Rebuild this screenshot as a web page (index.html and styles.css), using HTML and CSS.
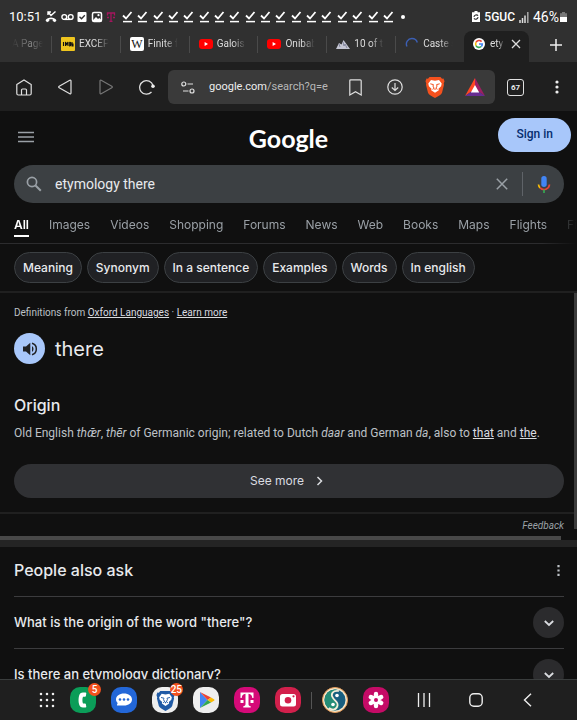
FILE: index.html
```html
<!DOCTYPE html>
<html lang="en">
<head>
<meta charset="utf-8">
<meta name="viewport" content="width=device-width, initial-scale=1">
<title>etymology there - Google Search</title>
<link rel="stylesheet" href="styles.css">
</head>
<body>
<svg class="defs" aria-hidden="true">
  <symbol id="check" viewBox="0 0 11 12"><path d="M1 4.500l3 3L9.500 1" fill="none" stroke="#fff" stroke-width="1.800"/><path d="M1 10.600h9" stroke="#fff" stroke-width="1.500"/></symbol>
  <symbol id="youtube" viewBox="0 0 14 14"><rect y="2" width="14" height="10" rx="3" fill="#f00"/><path d="M5.600 5v4l3.400-2z" fill="#fff"/></symbol>
  <symbol id="chevron" viewBox="0 0 12 12"><path d="M1.800 4L6 8l4.200-4" fill="none" stroke="#dadce0" stroke-width="1.800"/></symbol>
  <symbol id="lion" viewBox="0 0 20 22"><path d="M4.500 1h11l1.500 1.800 1.500-.3 1 2.800-.8 2.500.3 1-2 8c-.6 2-4 3.600-7 5.200-3-1.600-6.400-3.200-7-5.200L1 8.800l.3-1L.5 5.300l1-2.800 1.500.3z" fill="currentColor"/><path d="M6 4l4 .8L14 4l2.700 3.500-.6 2.700-2.600 2.500.3 1.500L10 16.800l-3.800-2.600.3-1.500L3.900 10.200 3.300 7.500z" fill="#fff"/><path d="M5.300 7.800l3.100.8-.4 1.500 1.100 2.300-1.600.9M14.700 7.800l-3.100.8.4 1.500-1.100 2.300 1.600.9M10 12.500v1.500" fill="none" stroke="currentColor" stroke-width="1"/></symbol>
</svg>

<div class="status">
  <time class="clock">10:51</time>
  <div class="notices">
    <svg width="12" height="12" viewBox="0 0 12 12"><path d="M3 1l3 3.500 4.500-4M3 4V1h3" fill="none" stroke="#fff" stroke-width="1.400"/><path d="M.5 9.200C3 5.500 9 5.500 11.500 9.200L10 11.200 7.700 10V8.300H4.300V10L2 11.200z" fill="#fff"/></svg>
    <svg width="13" height="12" viewBox="0 0 13 12"><g fill="none" stroke="#fff" stroke-width="1.400"><circle cx="3.300" cy="6" r="2.400"/><circle cx="9.700" cy="6" r="2.400"/><path d="M3.300 8.400h6.400"/></g></svg>
    <svg width="10" height="12" viewBox="0 0 10 12"><rect x=".5" y="1" width="9" height="10" rx="1" fill="#fff"/><path d="M2.500 5.800l2 2 3.300-3.600" fill="none" stroke="#303030" stroke-width="1.300"/></svg>
    <svg width="12" height="12" viewBox="0 0 12 12"><rect x="1.500" y="1.500" width="9" height="9" rx="1.500" fill="none" stroke="#fff" stroke-width="1.500"/><path d="M2 9l3-3 2 2 1.300-1L10.500 9v1.500H2z" fill="#fff"/><circle cx="7.500" cy="4.200" r="1.100" fill="#fff"/></svg>
    <svg width="10" height="12" viewBox="0 0 10 12"><path d="M1.500 4.500V2h7v2.500M5 2v8.300M3.500 10.300h3M1 6.500h2M7 6.500h2" fill="none" stroke="#a5155e" stroke-width="1.300"/></svg>
  </div>
  <div class="checks">
    <svg><use href="#check"/></svg><svg><use href="#check"/></svg><svg><use href="#check"/></svg><svg><use href="#check"/></svg><svg><use href="#check"/></svg><svg><use href="#check"/></svg><svg><use href="#check"/></svg><svg><use href="#check"/></svg><svg><use href="#check"/></svg><svg><use href="#check"/></svg><svg><use href="#check"/></svg><svg><use href="#check"/></svg><svg><use href="#check"/></svg><svg><use href="#check"/></svg><svg><use href="#check"/></svg><svg><use href="#check"/></svg><svg><use href="#check"/></svg><svg><use href="#check"/></svg>
  </div>
  <i class="dot"></i>
  <div class="signal">
    <svg width="8" height="12" viewBox="0 0 8 12"><path d="M2.500 0h3v1.300H8V11H0V1.300h2.500z" fill="#fff"/><path d="M2 6c0-2 3-3 4-1.200M6 6c0 2.200-3 3-4 1.400" fill="none" stroke="#303030" stroke-width="1.100"/></svg>
    <span class="net">5GUC</span>
    <svg width="10" height="11" viewBox="0 0 10 11"><path d="M1 8v3M3.500 6v5M6 3.500V11" stroke="#ddd" stroke-width="1.500"/><path d="M8.800 0v11" stroke="#aaa" stroke-width="1.500"/></svg>
    <span class="pct">46%</span>
    <svg width="7" height="12" viewBox="0 0 7 12"><path d="M2 1h3v1.200h2V11H0V2.200h2z" fill="#777"/><path d="M0 6h7v5H0z" fill="#fff"/></svg>
  </div>
</div>

<div class="tabs">
  <div class="tab first"><span class="fade-left">A Page</span></div>
  <div class="tab"><svg width="14" height="14" viewBox="0 0 14 14"><rect width="14" height="14" rx="1" fill="#efc51e"/><path d="M2.500 5v4M4.500 9V5l1.200 2.500L7 5v4M8.700 5v4c1.600 0 1.600-4 0-4M11 5v4h1V7h-1" fill="none" stroke="#111" stroke-width="1.100"/></svg><span>EXCEP</span></div>
  <div class="tab"><svg width="14" height="14" viewBox="0 0 14 14"><rect width="14" height="14" rx="2" fill="#fff"/><text x="7" y="11" class="wiki">W</text></svg><span>Finite f</span></div>
  <div class="tab"><svg width="14" height="14"><use href="#youtube"/></svg><span>Galois</span></div>
  <div class="tab"><svg width="14" height="14"><use href="#youtube"/></svg><span>Onibab</span></div>
  <div class="tab"><svg width="14" height="14" viewBox="0 0 14 14"><path d="M0 12l3-6 2.500 1.500L7.500 3 14 12z" fill="#c4c5d2"/><path d="M7 5l1 4 1-2 2 4M3 7l1 3" fill="none" stroke="#82859c"/></svg><span>10 of t</span></div>
  <div class="tab"><svg width="14" height="14" viewBox="0 0 14 14"><path d="M2 9.500A5.500 5.500 0 0 1 7 1.500a5.500 5.500 0 0 1 5.300 4" fill="none" stroke="#3c5fb4" stroke-width="1.400"/></svg><span>Caste s</span></div>
  <div class="tab active"><svg width="12" height="12" viewBox="0 0 12 12"><circle cx="6" cy="6" r="6" fill="#fff"/><g fill="none" stroke-width="1.600"><path d="M8.600 3.600A3.400 3.400 0 0 0 3 4.400" stroke="#ea4335"/><path d="M3 4.400a3.400 3.400 0 0 0 0 3.200" stroke="#fbbc05"/><path d="M3 7.600a3.400 3.400 0 0 0 5.300.9" stroke="#34a853"/><path d="M8.300 8.500A3.400 3.400 0 0 0 9.300 6H6" stroke="#4285f4"/></g></svg><span>ety</span><button class="bare" aria-label="Close tab"><svg width="10" height="10" viewBox="0 0 10 10"><path d="M1 1l8 8M9 1L1 9" stroke="#ddd" stroke-width="1.300"/></svg></button></div>
  <button class="bare add" aria-label="New tab"><svg width="12" height="12" viewBox="0 0 12 12"><path d="M6 0v12M0 6h12" stroke="#eee" stroke-width="1.500"/></svg></button>
</div>

<div class="toolbar">
  <div class="controls">
    <button class="bare" aria-label="Home"><svg width="16" height="17" viewBox="0 0 16 17"><path d="M.8 5.500L8 1l7.200 4.500v9c0 1-.5 1.500-1.500 1.500H2.300C1.300 16 .8 15.500.8 14.500zM5.500 16v-5c0-.7.3-1 1-1h3c.7 0 1 .3 1 1v5" fill="none" stroke="#e0e0e0" stroke-width="1.200"/></svg></button>
    <button class="bare" aria-label="Back"><svg width="14" height="16" viewBox="0 0 14 16"><path d="M1.200 7.200L11.800 1.300c.7-.3 1.200 0 1.200.7v12c0 .7-.5 1-1.200.7L1.200 8.800c-.7-.4-.7-1.200 0-1.600z" fill="none" stroke="#e0e0e0" stroke-width="1.200"/></svg></button>
    <button class="bare" aria-label="Forward"><svg width="14" height="16" viewBox="0 0 14 16"><path d="M12.800 7.200L2.200 1.300C1.500 1 1 1.300 1 2v12c0 .7.500 1 1.200.7l10.600-5.900c.7-.4.7-1.200 0-1.600z" fill="none" stroke="#777" stroke-width="1.200"/></svg></button>
    <button class="bare" aria-label="Reload"><svg width="16" height="16" viewBox="0 0 16 16"><path d="M12.500 13A6.800 6.800 0 1 1 14 6.500" fill="none" stroke="#e0e0e0" stroke-width="1.300"/><circle cx="14" cy="7.200" r="1.800" fill="#eee"/></svg></button>
  </div>
  <div class="urlbar">
    <button class="bare" aria-label="Site settings"><svg width="14" height="13" viewBox="0 0 14 13"><g fill="none" stroke="#e0e0e0" stroke-width="1.200"><circle cx="2.800" cy="3" r="2"/><path d="M6.500 3H12M2 10h5.500"/><circle cx="11" cy="10" r="2"/></g></svg></button>
    <a class="url" href="#">google.com<span>/search?q=e</span></a>
    <button class="bare" aria-label="Bookmark"><svg width="13" height="17" viewBox="0 0 13 17"><path d="M.8 1.800c0-.7.300-1 1-1h9.400c.7 0 1 .3 1 1V16L6.500 12.800.8 16z" fill="none" stroke="#e0e0e0" stroke-width="1.200"/></svg></button>
    <button class="bare" aria-label="Downloads"><svg width="16" height="16" viewBox="0 0 16 16"><g fill="none" stroke="#e0e0e0" stroke-width="1.200"><circle cx="8" cy="8" r="7.200"/><path d="M8 4v7.500M4.800 8.500L8 11.500l3.200-3"/></g></svg></button>
    <button class="bare orange" aria-label="Brave Shields"><svg width="20" height="22"><use href="#lion"/></svg></button>
    <button class="bare" aria-label="Brave Rewards"><svg width="20" height="18" viewBox="0 0 20 18"><path d="M10 0L0 18l10-7z" fill="#ff4724"/><path d="M10 0l10 18-10-7z" fill="#9e1f63"/><path d="M0 18h20l-10-7z" fill="#662d91"/><path d="M10 7l-4.200 7.500h8.400z" fill="#fff"/></svg></button>
  </div>
  <button class="count" aria-label="67 open tabs">67</button>
  <button class="bare menu" aria-label="Menu"><svg width="4" height="14" viewBox="0 0 4 14"><g fill="#eee"><circle cx="2" cy="2" r="1.600"/><circle cx="2" cy="7" r="1.600"/><circle cx="2" cy="12" r="1.600"/></g></svg></button>
</div>

<main>
  <header class="head">
    <button class="bare" aria-label="Main menu"><svg width="16" height="12" viewBox="0 0 16 12"><path d="M0 1.500h16M0 6h16M0 10.500h16" stroke="#9aa0a6" stroke-width="1.400"/></svg></button>
    <a class="logo" href="#">Google</a>
    <a class="signin" href="#">Sign in</a>
  </header>

  <form class="search">
    <svg width="16" height="16" viewBox="0 0 16 16"><circle cx="6" cy="6" r="4.600" fill="none" stroke="#9aa0a6" stroke-width="1.700"/><path d="M9.500 9.500l5.300 5.300" stroke="#9aa0a6" stroke-width="2"/></svg>
    <input type="text" value="etymology there" aria-label="Search">
    <button type="button" class="bare" aria-label="Clear"><svg width="12" height="12" viewBox="0 0 12 12"><path d="M.8.8l10.400 10.400M11.200.8L.8 11.200" stroke="#9aa0a6" stroke-width="1.500"/></svg></button>
    <i class="rule"></i>
    <button type="button" class="bare" aria-label="Search by voice"><svg width="14" height="18" viewBox="0 0 14 18"><rect x="4.300" y="1" width="5.400" height="11" rx="2.700" fill="#4285f4"/><g fill="none" stroke-width="1.700"><path d="M1.500 9.500a5.500 5.500 0 0 0 1.600 3.400" stroke="#fbbc04"/><path d="M3.100 12.900A5.500 5.500 0 0 0 12.500 9.500" stroke="#ea4335"/><path d="M7 14.500V18" stroke="#34a853"/></g></svg></button>
  </form>

  <nav class="modes">
    <a class="on" href="#">All</a><a href="#">Images</a><a href="#">Videos</a><a href="#">Shopping</a><a href="#">Forums</a><a href="#">News</a><a href="#">Web</a><a href="#">Books</a><a href="#">Maps</a><a href="#">Flights</a><a href="#">Finance</a>
  </nav>

  <div class="chips">
    <button>Meaning</button><button>Synonym</button><button>In a sentence</button><button>Examples</button><button>Words</button><button>In english</button>
  </div>

  <section class="dict">
    <p class="source">Definitions from <a href="#">Oxford Languages</a> · <a href="#">Learn more</a></p>
    <div class="word">
      <button class="speak" aria-label="Listen"><svg width="16" height="14" viewBox="0 0 16 14"><path d="M1 4.500h3L8.300.8v12.400L4 9.500H1z" fill="#202124"/><path d="M10 4c2 1.500 2 4.500 0 6z" fill="#202124"/><path d="M10 1.300c5.800 1.500 5.800 9.900 0 11.400" fill="none" stroke="#202124" stroke-width="1.500"/></svg></button>
      <h1>there</h1>
    </div>
    <h2>Origin</h2>
    <p class="origin">Old English <em>thǣr</em>, <em>thēr</em> of Germanic origin; related to Dutch <em>daar</em> and German <em>da</em>, also to <a href="#">that</a> and <a href="#">the</a>.</p>
    <button class="more">See more <svg width="8" height="10" viewBox="0 0 8 10"><path d="M1.500 1l4 4-4 4" fill="none" stroke="#dadce0" stroke-width="1.500"/></svg></button>
    <div class="feedback"><a href="#">Feedback</a></div>
    <i class="vbar"></i>
    <i class="hbar"></i>
  </section>

  <section class="paa">
    <div class="paa-head"><h2>People also ask</h2><button class="bare" aria-label="About this result"><svg width="3" height="11" viewBox="0 0 3 11"><path d="M.4 0h2.200v2.200H.4zM.4 4.400h2.200v2.200H.4zM.4 8.800h2.200V11H.4z" fill="#bdc1c6"/></svg></button></div>
    <div class="q"><h3>What is the origin of the word "there"?</h3><button aria-label="Expand"><svg width="12" height="12"><use href="#chevron"/></svg></button></div>
    <div class="q"><h3>Is there an etymology dictionary?</h3><button aria-label="Expand"><svg width="12" height="12"><use href="#chevron"/></svg></button></div>
  </section>
</main>

<nav class="dock">
  <button class="bare" aria-label="All apps"><svg width="16" height="16" viewBox="0 0 16 16"><path d="M2 2h12.100M2 8h12.100M2 14h12.100" stroke="#eee" stroke-width="2.600" stroke-linecap="round" stroke-dasharray="0 6"/></svg></button>
  <button class="app phone" aria-label="Phone"><svg width="26" height="26" viewBox="0 0 26 26"><path d="M9 9c.5-2.500 2-3.500 4-3.500h2.500c.5 0 .8.300.8.800l-.4 2.700c-.1.500-.4.700-.9.700h-2c-.8 1.500-.8 5.200 0 6.700h2c.5 0 .8.300.9.800l.4 2.600c0 .5-.3.800-.8.800H13c-2 0-3.500-1-4-3.500-.6-2.500-.6-5.500 0-8.100z" fill="#fff"/></svg><b>5</b></button>
  <button class="app chat" aria-label="Messages"><svg width="26" height="26" viewBox="0 0 26 26"><path d="M5 12.500C5 9 8.500 6.500 13 6.500s8 2.500 8 6-3.500 6-8 6H6.500c-.6 0-.7-.5-.4-1l.6-1.500C5.600 15 5 13.800 5 12.500z" fill="#fff"/><g fill="#2367d8"><circle cx="9" cy="12.500" r="1.300"/><circle cx="13" cy="12.500" r="1.300"/><circle cx="17" cy="12.500" r="1.300"/></g></svg></button>
  <button class="app brave" aria-label="Brave"><svg width="19" height="21"><use href="#lion"/></svg><b>25</b></button>
  <button class="app play" aria-label="Play Store"><svg width="26" height="26" viewBox="0 0 26 26"><path d="M7 5l7.500 8L7 21z" fill="#4285f4"/><path d="M7 5l11 5.500-3.500 2.500z" fill="#ea4335"/><path d="M18 10.500l3 1.700c.6.400.6 1.200 0 1.600l-3 1.700-3.500-2.500z" fill="#fbbc04"/><path d="M7 21l11-5.500-3.500-2.500z" fill="#34a853"/></svg></button>
  <button class="app tmo" aria-label="T-Mobile"><svg width="26" height="26" viewBox="0 0 26 26"><path d="M6.500 11V5.500h13V11h-1.200c-.2-2.500-1.400-4-3.800-4.200V17c0 1.500.7 2 2.200 2.200v1.300H9.300v-1.300c1.500-.2 2.200-.7 2.200-2.200V6.800C9.100 7 7.900 8.500 7.700 11zM6.500 13h3v3h-3zM16.500 13h3v3h-3z" fill="#fff"/></svg></button>
  <button class="app cam" aria-label="Camera"><svg width="26" height="26" viewBox="0 0 26 26"><rect x="5" y="7" width="16" height="12.500" rx="2.500" fill="#fff"/><circle cx="13" cy="13.200" r="3.300" fill="#d2204c"/><circle cx="18.500" cy="9.300" r="1.100" fill="#d2204c"/></svg></button>
  <i class="split"></i>
  <button class="app yin" aria-label="Journal"><svg width="26" height="26" viewBox="0 0 26 26"><circle cx="13" cy="13" r="12.500" fill="#f3e7cd" stroke="#e59a55"/><circle cx="13" cy="13" r="10.500" fill="#195f80"/><path d="M13 2.500a10.500 10.500 0 0 0 0 21c8-4 2-8-.5-11S10 5 16 3z" fill="#258d76"/><path d="M17 4c-6-1-9 3-6 7s6 5 4 9-6 2.500-8 1" fill="none" stroke="#f5edda" stroke-width="1.700"/><circle cx="15" cy="8.500" r="1.800" fill="#fff"/><circle cx="11" cy="17.500" r="1.800" fill="#fff"/></svg></button>
  <button class="app flower" aria-label="Gallery"><svg width="26" height="26" viewBox="0 0 26 26"><g stroke="#fff" stroke-width="4.400" stroke-linecap="round"><path d="M13 7v12M7.800 10l10.400 6M18.200 10L7.800 16"/></g><circle cx="13" cy="13" r="2" fill="#c50b66"/></svg></button>
  <div class="keys">
    <button class="bare" aria-label="Recents"><svg width="14" height="14" viewBox="0 0 14 14"><path d="M1.500 0v14M7 0v14M12.500 0v14" stroke="#eee" stroke-width="1.300"/></svg></button>
    <button class="bare" aria-label="Home screen"><svg width="14" height="14" viewBox="0 0 14 14"><rect x=".8" y=".8" width="12.400" height="12.400" rx="4" fill="none" stroke="#eee" stroke-width="1.400"/></svg></button>
    <button class="bare" aria-label="Go back"><svg width="9" height="14" viewBox="0 0 9 14"><path d="M8 .8L1.500 7 8 13.200" fill="none" stroke="#eee" stroke-width="1.400"/></svg></button>
  </div>
</nav>
</body>
</html>
```

FILE: styles.css
```css
* { box-sizing: border-box; margin: 0; padding: 0; }
body {
  display: flex;
  flex-direction: column;
  height: 100vh;
  overflow: hidden;
  background: #101010;
  color: #e8eaed;
  font: 12px/16px Roboto, "Noto Sans", sans-serif;
}
svg { display: block; flex: none; }
button, input { font: inherit; color: inherit; border: 0; background: none; }
a { color: inherit; text-decoration: none; }
.defs { position: absolute; width: 0; height: 0; }
.bare { display: flex; align-items: center; justify-content: center; }

/* System status bar */
.status {
  flex: none;
  display: flex;
  align-items: center;
  height: 31px;
  padding: 3px 10px 0 9px;
  background: #303030;
  color: #fff;
}
.clock { width: 36px; font-size: 13px; }
.notices { display: flex; justify-content: space-between; width: 71px; }
.checks { display: flex; justify-content: space-between; width: 272px; margin-left: 6px; }
.checks svg { width: 11px; height: 12px; }
.dot { width: 4px; height: 4px; margin-left: 7px; border-radius: 50%; background: #fff; }
.signal { display: flex; align-items: center; gap: 4px; margin-left: auto; }
.net { font-size: 12px; font-weight: 500; }
.pct { font-size: 14px; margin-right: -3px; }

/* Browser tab strip */
.tabs {
  flex: none;
  display: flex;
  height: 32px;
  background: #303030;
  border-bottom: 1px solid #1f1f1f;
  font-size: 10px;
  color: #ddd;
}
.tab {
  flex: 1 1 0;
  min-width: 0;
  display: flex;
  align-items: center;
  gap: 4px;
  padding: 0 8px 6px 10px;
  background: linear-gradient(#4a4a4a, #4a4a4a) left 5px / 1px 17px no-repeat;
}
.tab span {
  flex: 1;
  min-width: 0;
  overflow: hidden;
  white-space: nowrap;
  mask-image: linear-gradient(90deg, #000 50%, transparent 90%);
}
.tab.first { flex: none; width: 51px; padding-left: 12px; background: none; }
.tab .fade-left { color: #888; mask-image: linear-gradient(90deg, transparent, #000 60%, transparent); }
.tab.active {
  flex: none;
  width: 65px;
  gap: 5px;
  padding: 0 8px 6px 9px;
  border-radius: 8px 8px 0 0;
  background: #1f1f1f;
}
.add { width: 48px; padding: 0 0 4px 6px; }

/* Browser toolbar */
.toolbar {
  flex: none;
  display: flex;
  align-items: center;
  height: 48px;
  background: #1f1f1f;
}
.controls { display: flex; width: 168px; padding-left: 3px; }
.controls button { flex: 1; height: 34px; }
.urlbar {
  flex: 1;
  display: flex;
  align-items: center;
  height: 34px;
  padding: 0 10px 0 13px;
  border-radius: 6px;
  background: #3a3a3a;
}
.url { flex: 1; margin-left: 14px; color: #eee; font-size: 11px; white-space: nowrap; }
.url span { color: #b8b8b8; }
.urlbar .url ~ button { width: 20px; }
.urlbar button + button { margin-left: 20px; }
.orange { color: #f4511e; }
.count {
  width: 17px;
  height: 17px;
  margin-left: 12px;
  border: 1px solid #e0e0e0;
  border-radius: 3px;
  font: 700 8px/15px Roboto, sans-serif;
}
.menu { width: 53px; padding: 0 0 0 12px; }

/* Page */
main { flex: 1; min-height: 0; overflow: hidden; }
.head {
  display: grid;
  grid-template-columns: 1fr auto 1fr;
  align-items: center;
  height: 54px;
  padding: 0 6px 6px;
}
.head .bare { justify-self: start; padding: 4px 0 0 12px; }
.logo { padding-top: 5px; font: 700 25px/32px Lato, sans-serif; color: #fff; }
.signin {
  justify-self: end;
  padding: 8px 18px 10px;
  border-radius: 17px;
  background: #a8c7fa;
  color: #062e6f;
  font-weight: 500;
}
.search {
  display: flex;
  align-items: center;
  height: 38px;
  margin: 0 13px 0 14px;
  padding: 0 13px 0 12px;
  border-radius: 19px;
  background: #3c4043;
}
.search input { flex: 1; min-width: 0; margin-left: 13px; font-size: 14px; outline: 0; }
.rule { width: 1px; height: 24px; margin: 0 14px; background: #5f6368; }
.modes {
  display: flex;
  gap: 20px;
  height: 41px;
  padding: 12px 0 0 14px;
  overflow: hidden;
  border-bottom: 1px solid #2c2c2e;
  color: #9aa0a6;
  font: 12px/20px Inter, sans-serif;
  mask-image: linear-gradient(90deg, #000 94%, transparent);
}
.modes a { height: 22px; white-space: nowrap; }
.modes .on { color: #fff; font-weight: 600; border-bottom: 2px solid #fff; }
.chips { display: flex; gap: 5px; padding: 8px 14px; border-bottom: 2px solid #202020; }
.chips button {
  height: 31px;
  padding: 0 8px;
  border: 1px solid #3c4043;
  border-radius: 16px;
  background: #202124;
  font: 500 12px/20px Inter, sans-serif;
  white-space: nowrap;
}

/* Dictionary card */
.dict { position: relative; padding: 12px 13px 0 14px; border-bottom: 7px solid #242424; }
.source { font-size: 10px; color: #bdc1c6; }
.source a, .origin a { text-decoration: underline; color: #dadce0; }
.word { display: flex; align-items: center; gap: 10px; margin-top: 12px; }
.speak {
  display: flex;
  align-items: center;
  justify-content: center;
  width: 31px;
  height: 31px;
  border-radius: 50%;
  background: #a8c7fa;
}
h1 { font: 400 20px/28px Inter, sans-serif; }
.dict h2 { margin-top: 31px; font: 500 16px/20px Inter, sans-serif; }
.origin { margin-top: 10px; color: #bdc1c6; line-height: 16px; }
.more {
  display: flex;
  align-items: center;
  justify-content: center;
  gap: 12px;
  width: 100%;
  height: 34px;
  margin-top: 23px;
  padding-right: 4px;
  border-radius: 17px;
  background: #303134;
  color: #dadce0;
  font: 12px/20px Inter, sans-serif;
}
.feedback {
  height: 28px;
  margin: 14px -13px 0 -14px;
  padding: 4px 13px 0;
  border-top: 2px solid #202020;
  color: #9aa0a6;
  font-size: 10px;
  font-style: italic;
  text-align: right;
}
.vbar { position: absolute; top: 0; right: 0; bottom: 11px; width: 3px; background: #3c3c3c; }
.hbar { position: absolute; left: 0; right: 16px; bottom: 0; height: 4px; background: #484848; }

/* Related questions */
.paa { padding: 0 13px 0 14px; }
.paa-head { display: flex; align-items: center; justify-content: space-between; height: 49px; padding: 0 4px 3px 0; }
.paa h2 { font: 500 16px/24px Inter, sans-serif; }
.q { display: flex; align-items: center; justify-content: space-between; height: 52px; border-top: 1px solid #3c3c3e; }
.q h3 { padding-bottom: 2px; font: 500 13px/20px Inter, sans-serif; }
.q button {
  display: flex;
  align-items: center;
  justify-content: center;
  width: 31px;
  height: 31px;
  border-radius: 50%;
  background: #2b2b2d;
}

/* System dock */
.dock {
  flex: none;
  display: flex;
  align-items: center;
  gap: 15px;
  height: 41px;
  padding-left: 39px;
  border-top: 1px solid #3a3d3d;
  background: #1f1f1f;
}
.app {
  position: relative;
  display: flex;
  align-items: center;
  justify-content: center;
  width: 26px;
  height: 26px;
  border-radius: 10px;
  color: #1f5aa5;
}
.app b {
  position: absolute;
  top: -4px;
  right: -5px;
  min-width: 13px;
  height: 13px;
  padding: 0 1px;
  border-radius: 7px;
  background: #f4511e;
  color: #fff;
  font: 500 10px/13px Roboto, sans-serif;
}
.phone { background: #0b9d58; }
.chat { background: #2367d8; }
.brave, .play { background: #eee; }
.tmo { background: #d50a78; }
.cam { background: #d2204c; }
.flower { background: #c50b66; }
.split { width: 1px; height: 17px; margin: 0 -5px; background: #555; }
.keys { flex: 1; display: flex; margin-left: -6px; padding-right: 24px; }
.keys button { flex: 1; }
.wiki { font: 12px "Liberation Serif", serif; text-anchor: middle; fill: #111; }
```
